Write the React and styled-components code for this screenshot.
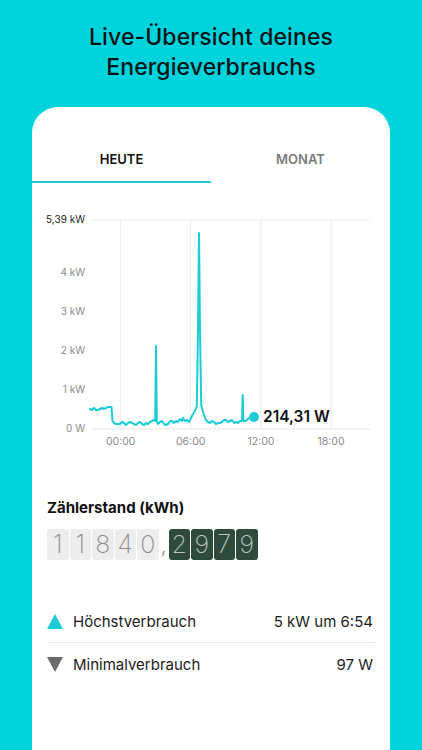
import React from "react";
import styled, { createGlobalStyle } from "styled-components";

const CYAN = "#00d3dc";
const LINE = "#1cccd6";

const Global = createGlobalStyle`
  html, body { margin: 0; padding: 0; }
  body {
    background: ${CYAN};
    font-family: Inter, "Noto Sans", "Liberation Sans", sans-serif;
    -webkit-font-smoothing: antialiased;
  }
`;

const Page = styled.div`
  width: 422px;
  height: 750px;
  overflow: hidden;
  display: flex;
  flex-direction: column;
  align-items: center;
`;

const Heading = styled.h1`
  margin: 22px 0 25px;
  font-size: 23px;
  line-height: 30px;
  font-weight: 500;
  color: #061516;
  text-align: center;
  letter-spacing: 0.1px;
`;

const Card = styled.div`
  width: 358px;
  flex: 1;
  background: #fff;
  border-radius: 26px 26px 0 0;
  display: flex;
  flex-direction: column;
`;

const Tabs = styled.div`
  display: grid;
  grid-template-columns: 1fr 1fr;
`;

const Tab = styled.div`
  padding: 44px 0 14px;
  text-align: center;
  font-size: 13px;
  line-height: 16px;
  font-weight: 600;
  color: ${(p) => (p.$active ? "#111" : "#7a7a7a")};
  border-bottom: 2px solid ${(p) => (p.$active ? LINE : "transparent")};
`;

const ChartSvg = styled.svg`
  display: block;
  width: 358px;
  height: 282px;
`;

const Section = styled.div`
  padding: 0 15px;
`;

const SectionTitle = styled.div`
  margin-top: 33px;
  font-size: 15px;
  line-height: 20px;
  font-weight: 700;
  color: #111;
`;

const Counter = styled.div`
  display: flex;
  align-items: flex-end;
  margin-top: 11px;
  height: 31px;
`;

const DigitGroup = styled.div`
  display: flex;
  gap: 1px;
`;

const Digit = styled.div`
  width: 21.5px;
  height: 31px;
  border-radius: 3px;
  background: ${(p) => (p.$dark ? "#2d4a3c" : "#ededed")};
  color: ${(p) => (p.$dark ? "#b9c6bf" : "#8c8c8c")};
  font-size: 25px;
  font-weight: 200;
  line-height: 31px;
  text-align: center;
`;

const Comma = styled.div`
  width: 10px;
  font-size: 20px;
  font-weight: 300;
  color: #888;
  text-align: center;
  line-height: 28px;
`;

const Stats = styled.div`
  margin-top: 40px;
  display: flex;
  flex-direction: column;
`;

const StatRow = styled.div`
  display: flex;
  align-items: center;
  height: 42px;
  padding-right: 2px;
  border-bottom: ${(p) => (p.$divider ? "1px solid #e8e8e8" : "none")};
  font-size: 15px;
  color: #1c1c1c;
`;

const Triangle = styled.span`
  width: 0;
  height: 0;
  border-left: 8.5px solid transparent;
  border-right: 8.5px solid transparent;
  ${(p) =>
    p.$down
      ? `border-top: 15px solid #6b6b6b;`
      : `border-bottom: 15px solid ${LINE};`}
  margin-right: 10px;
`;

const StatLabel = styled.span`
  flex: 1;
`;

const StatValue = styled.span``;

// page coords -> svg coords (card left 32, chart top 183)
const pts = [
  [90, 409], [92, 410], [94, 408], [96, 410], [98, 410], [100, 409], [102, 408], [104, 409],
  [106, 408], [108, 407], [110, 407], [111.5, 407], [112.5, 421], [114, 423], [116, 424],
  [118, 424], [120, 424], [122, 422], [124, 423], [126, 425], [128, 423], [130, 422], [132, 423],
  [134, 424], [136, 425], [138, 423], [140, 422], [142, 424], [144, 425], [146, 423], [148, 424],
  [150, 422], [152, 421], [154, 420], [155.2, 421], [156, 346], [156.8, 421], [158, 424],
  [160, 422], [162, 421], [164, 424], [166, 425], [168, 424], [170, 421], [172, 421], [174, 423],
  [176, 421], [178, 422], [180, 419], [182, 421], [183, 418], [185, 421], [187, 420], [189, 422],
  [191, 418], [193, 414], [195, 411], [196.8, 406], [198, 330], [199, 233], [200, 330],
  [201.2, 405], [202.5, 410], [204, 415], [206, 420], [208, 422], [210, 423], [212, 421],
  [214, 422], [216, 424], [218, 423], [220, 423], [222, 422], [224, 420], [226, 420], [228, 422],
  [230, 421], [232, 420], [234, 423], [236, 422], [238, 423], [240, 421], [242, 421],
  [242.7, 395], [243.4, 421], [245, 421], [247, 420], [249, 418], [251, 418], [254, 417],
];

const OX = 32;
const OY = 183;
const path = pts
  .map(([x, y], i) => `${i ? "L" : "M"}${(x - OX).toFixed(1)} ${(y - OY).toFixed(1)}`)
  .join(" ");

const yLabels = [
  { t: "0 W", y: 429 },
  { t: "1 kW", y: 390 },
  { t: "2 kW", y: 351 },
  { t: "3 kW", y: 312 },
  { t: "4 kW", y: 273 },
];
const xLines = [120.7, 190.7, 261, 331];
const xLabels = ["00:00", "06:00", "12:00", "18:00"];

function Chart() {
  return (
    <ChartSvg viewBox="0 0 358 282">
      <line x1={60} x2={338} y1={37} y2={37} stroke="#ececec" strokeWidth="1" />
      <line x1={60} x2={338} y1={246} y2={246} stroke="#e6e6e6" strokeWidth="1" />
      {xLines.map((x) => (
        <line key={x} x1={x - OX} x2={x - OX} y1={37} y2={246} stroke="#ececec" strokeWidth="1" />
      ))}
      <text x={53} y={37.5} textAnchor="end" dominantBaseline="middle" fontSize="10" fill="#222"
        fontFamily="Inter, sans-serif">5,39 kW</text>
      {yLabels.map((l) => (
        <text key={l.t} x={53} y={l.y - OY + 0.5} textAnchor="end" dominantBaseline="middle"
          fontSize="10" fill="#8a8a8a" fontFamily="Inter, sans-serif">{l.t}</text>
      ))}
      {xLabels.map((t, i) => (
        <text key={t} x={xLines[i] - OX} y={259} textAnchor="middle" dominantBaseline="middle"
          fontSize="10.5" fill="#8a8a8a" fontFamily="Inter, sans-serif">{t}</text>
      ))}
      <path d={path} fill="none" stroke={LINE} strokeWidth="2" strokeLinejoin="round" strokeLinecap="round" />
      <circle cx={254 - OX} cy={417 - OY} r="5" fill={LINE} />
      <text x={263 - OX} y={417.5 - OY} dominantBaseline="middle" fontSize="15.5" fontWeight="600"
        fill="#111" fontFamily="Inter, sans-serif">214,31 W</text>
    </ChartSvg>
  );
}

export default function App() {
  return (
    <>
      <Global />
      <Page>
        <Heading>
          Live-Übersicht deines
          <br />
          Energieverbrauchs
        </Heading>
        <Card>
          <Tabs>
            <Tab $active>HEUTE</Tab>
            <Tab>MONAT</Tab>
          </Tabs>
          <Chart />
          <Section>
            <SectionTitle>Zählerstand (kWh)</SectionTitle>
            <Counter>
              <DigitGroup>
                {"11840".split("").map((d, i) => (
                  <Digit key={i}>{d}</Digit>
                ))}
              </DigitGroup>
              <Comma>,</Comma>
              <DigitGroup>
                {"2979".split("").map((d, i) => (
                  <Digit key={i} $dark>{d}</Digit>
                ))}
              </DigitGroup>
            </Counter>
            <Stats>
              <StatRow $divider>
                <Triangle />
                <StatLabel>Höchstverbrauch</StatLabel>
                <StatValue>5 kW um 6:54</StatValue>
              </StatRow>
              <StatRow>
                <Triangle $down />
                <StatLabel>Minimalverbrauch</StatLabel>
                <StatValue>97 W</StatValue>
              </StatRow>
            </Stats>
          </Section>
        </Card>
      </Page>
    </>
  );
}
